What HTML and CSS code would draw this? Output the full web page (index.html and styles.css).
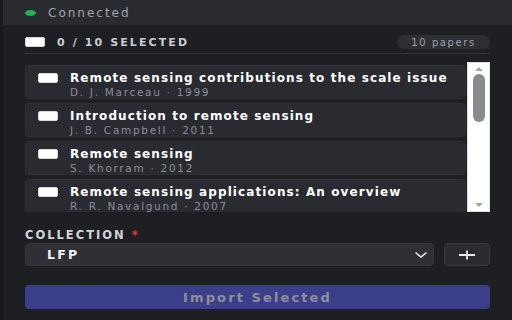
FILE: index.html
```html
<!DOCTYPE html>
<html>
<head>
<meta charset="utf-8">
<link rel="stylesheet" href="styles.css">
</head>
<body>
<div class="app">
  <header class="header">
    <span class="dot"></span>
    <span class="status">Connected</span>
  </header>
  <main class="main">
    <div class="toolbar">
      <span class="check"></span>
      <span class="selected">0 / 10 SELECTED</span>
      <span class="pill">10 papers</span>
    </div>
    <div class="list">
      <div class="items">
        <div class="item">
          <span class="check"></span>
          <div class="info">
            <div class="title">Remote sensing contributions to the scale issue</div>
            <div class="meta">D. J. Marceau · 1999</div>
          </div>
        </div>
        <div class="item">
          <span class="check"></span>
          <div class="info">
            <div class="title">Introduction to remote sensing</div>
            <div class="meta">J. B. Campbell · 2011</div>
          </div>
        </div>
        <div class="item">
          <span class="check"></span>
          <div class="info">
            <div class="title">Remote sensing</div>
            <div class="meta">S. Khorram · 2012</div>
          </div>
        </div>
        <div class="item">
          <span class="check"></span>
          <div class="info">
            <div class="title">Remote sensing applications: An overview</div>
            <div class="meta">R. R. Navalgund · 2007</div>
          </div>
        </div>
      </div>
      <div class="scrollbar">
        <span class="arrow up"></span>
        <span class="thumb"></span>
        <span class="track"></span>
        <span class="arrow down"></span>
      </div>
    </div>
    <div class="label">COLLECTION <span class="req">*</span></div>
    <div class="row">
      <div class="select">
        <span class="value">LFP</span>
        <svg class="chev" width="14" height="8" viewBox="0 0 14 8"><path d="M1.5 1.5 L7 6 L12.5 1.5" fill="none" stroke="#e8e9ec" stroke-width="1.6"/></svg>
      </div>
      <div class="plus">
        <svg width="18" height="10" viewBox="0 0 18 10"><path d="M1 5 H17 M9 0.5 V9.5" stroke="#e8e9ec" stroke-width="1.8"/></svg>
      </div>
    </div>
    <div class="import">Import Selected</div>
  </main>
</div>
</body>
</html>
```
FILE: styles.css
```css
html, body {
  margin: 0;
  padding: 0;
}
body {
  width: 512px;
  height: 320px;
  overflow: hidden;
  background: #1e1f23;
  font-family: "DejaVu Sans", sans-serif;
  color: #e6e7ea;
}
.app {
  height: 320px;
  border-left: 3px solid #18191c;
  box-sizing: border-box;
}
.header {
  height: 25px;
  background: #2a2b30;
  display: flex;
  align-items: center;
  padding-left: 22px;
  gap: 12px;
}
.dot {
  width: 11px;
  height: 6px;
  border-radius: 50%;
  background: #22b05a;
}
.status {
  font-size: 12px;
  letter-spacing: 2px;
  color: #9ea3ad;
}
.main {
  padding: 0 22px 0 22px;
}
.toolbar {
  height: 29px;
  box-sizing: border-box;
  padding-top: 6px;
  display: flex;
  align-items: center;
  border-bottom: 1px solid #35363b;
}
.check {
  width: 18px;
  height: 8px;
  background: #ffffff;
  border: 1px solid #d8d8d8;
  border-radius: 2px;
  flex: none;
}
.selected {
  margin-left: 12px;
  font-size: 11px;
  font-weight: bold;
  letter-spacing: 2.1px;
  color: #c9ccd3;
}
.pill {
  margin-left: auto;
  width: 93px;
  height: 14px;
  border-radius: 7px;
  background: #2d2f34;
  color: #9aa0aa;
  font-size: 10px;
  letter-spacing: 1.6px;
  display: flex;
  align-items: center;
  justify-content: center;
}
.list {
  margin-top: 8px;
  height: 150px;
  display: flex;
  gap: 1px;
}
.items {
  width: 441px;
  overflow: hidden;
  padding-top: 3px;
  display: flex;
  flex-direction: column;
  gap: 4px;
}
.item {
  flex: none;
  height: 34px;
  box-sizing: border-box;
  background: #2a2b30;
  border: 1px solid #303136;
  border-radius: 4px;
  display: flex;
  align-items: flex-start;
  padding: 6px 0 0 12px;
}
.item .check {
  margin-top: 1px;
}
.info {
  margin-left: 12px;
  display: flex;
  flex-direction: column;
  gap: 1px;
}
.title {
  font-size: 12px;
  font-weight: bold;
  letter-spacing: 1.1px;
  color: #ffffff;
  line-height: 13px;
}
.meta {
  font-size: 10.5px;
  letter-spacing: 1.7px;
  color: #8a8e98;
  line-height: 12px;
}
.scrollbar {
  width: 23px;
  box-sizing: border-box;
  background: #ffffff;
  border: 1px solid #e0e0e0;
  display: flex;
  flex-direction: column;
  align-items: center;
  padding: 4px 0;
}
.arrow {
  width: 0;
  height: 0;
  border-left: 4px solid transparent;
  border-right: 4px solid transparent;
  flex: none;
}
.arrow.up {
  border-bottom: 4px solid #a3a3a3;
}
.arrow.down {
  border-top: 4px solid #a3a3a3;
}
.thumb {
  margin-top: 3px;
  width: 12px;
  height: 48px;
  border-radius: 6px;
  background: #8b8b8b;
  flex: none;
}
.track {
  flex: 1;
}
.label {
  margin-top: 17px;
  font-size: 11.5px;
  font-weight: bold;
  letter-spacing: 2px;
  color: #d2d4da;
  line-height: 13px;
}
.req {
  color: #e03a3a;
}
.row {
  margin-top: 1px;
  display: flex;
  gap: 10px;
  height: 23px;
}
.select {
  flex: 1;
  background: #2f3035;
  border: 1px solid #35363b;
  border-radius: 4px;
  display: flex;
  align-items: center;
  padding: 0 5px 0 21px;
}
.value {
  font-size: 12.5px;
  font-weight: bold;
  letter-spacing: 2.2px;
  color: #f2f3f5;
}
.chev {
  margin-left: auto;
}
.plus {
  width: 46px;
  box-sizing: border-box;
  background: #2b2c31;
  border: 1px solid #3a3b40;
  border-radius: 4px;
  display: flex;
  align-items: center;
  justify-content: center;
}
.import {
  margin-top: 19px;
  height: 24px;
  border-radius: 4px;
  background: #3b3e88;
  color: #8e909b;
  font-size: 13px;
  font-weight: bold;
  letter-spacing: 2.1px;
  display: flex;
  align-items: center;
  justify-content: center;
}
```
